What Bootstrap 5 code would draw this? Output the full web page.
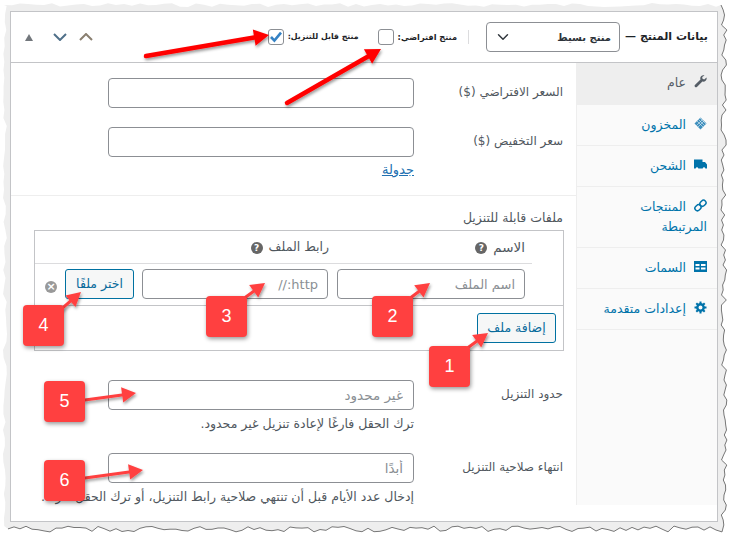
<!DOCTYPE html>
<html lang="ar" dir="rtl">
<head>
  <meta charset="UTF-8" />
  <title>بيانات المنتج</title>
  <link href="https://cdn.jsdelivr.net/npm/bootstrap@5.3.0/dist/css/bootstrap.min.css" rel="stylesheet" />
  <style>
    body { background: #fff; font-family: "DejaVu Sans", "Noto Sans", sans-serif; font-size: 12px; color: #50575e; width: 732px; height: 538px; overflow: hidden; position: relative; }
    .torn-edge { position: absolute; left: 0; top: 0; z-index: 0; }
    .overlay-art { position: absolute; left: 0; top: 0; z-index: 5; pointer-events: none; }
    .pd-box { position: relative; z-index: 1; margin: 11px 14px 0 0; width: 708px; height: 511px; background: #fff; border: 1px solid #c3c4c7; }
    .pd-head { height: 51px; border-bottom: 1px solid #c3c4c7; padding: 0 9px 0 13px; }
    .pd-title { font-size: 11px; font-weight: 700; color: #1d2327; width: 80px; white-space: nowrap; margin-left: 8px; }
    .pd-type { width: 134px; height: 30px; padding: 0 8px 0 24px; font-size: 10px; font-weight: 700; color: #2c3338; border: 1px solid #8c8f94; border-radius: 4px; background-position: left 8px center; margin-left: 17px; }
    .pd-divider { width: 1px; height: 14px; background: #dcdcde; margin-left: 11px; }
    .pd-check-label { font-size: 8.2px; font-weight: 700; color: #1d2327; white-space: nowrap; }
    .pd-check-label.is-long { font-size: 7.85px; }
    .pd-check { width: 16px; height: 16px; margin: 0 4px 0 19px; border: 1px solid #8c8f94; border-radius: 4px; }
    .pd-check:checked { background-color: #fff; border-color: #8c8f94; background-image: url("data:image/svg+xml,%3Csvg xmlns='http://www.w3.org/2000/svg' viewBox='0 0 16 16'%3E%3Cpath d='M3 8l3.4 3.6L13 3.6' fill='none' stroke='%233582c4' stroke-width='2.6'/%3E%3C/svg%3E"); background-size: 16px; }
    .pd-sorter { align-items: center; }
    .pd-chev-down { margin-right: 12px; }
    .pd-tri { margin-right: 19px; }
    .pd-tabs { width: 141px; background: #fafafa; border-left: 1px solid #eee; flex: none; }
    .pd-tab { display: block; padding: 10px 10px 0 8px; border-bottom: 1px solid #eee; color: #0073aa; font-size: 12.5px; line-height: 20px; text-decoration: none; height: 41px; }
    .pd-tab svg { margin: 0 0 0 8px; vertical-align: -1px; }
    .pd-tab.is-active { background: #eee; color: #555d66; height: 42px; }
    .pd-tab.is-tall { height: 61px; padding-left: 30px; }
    .pd-main { flex: 1; padding: 15px 13px 0 0; }
    .pd-row { display: flex; align-items: flex-start; }
    .pd-row-gap { margin-bottom: 19px; }
    .pd-label { width: 149px; flex: none; font-size: 12px; line-height: 16px; color: #50575e; padding-top: 6px; white-space: nowrap; }
    .pd-input { width: 306px; height: 30px; padding: 0 10px; font-size: 13.5px; color: #777; border: 1px solid #8c8f94; border-radius: 4px; }
    .pd-input::placeholder { color: #8a8f94; opacity: 1; }
    .pd-link { display: block; margin: 4px 149px 0 0; width: 33px; color: #2271b1; font-size: 13px; line-height: 18px; }
    .pd-sep { margin: 16px -13px 0 0; border-top: 1px solid #eee; width: 565px; }
    .pd-files-title { font-size: 12.5px; line-height: 16px; margin: 14px 0 4px; }
    .pd-files { width: 530px; height: 121px; margin: 0 -1px 29px 0; border: 1px solid #c3c4c7; }
    .pd-files-head { height: 33px; padding-top: 1px; margin-right: 31px; border-bottom: 1px solid #dcdcde; color: #50575e; font-size: 12.5px; }
    .pd-files-name { width: 203px; padding-right: 7px; font-size: 13.5px; }
    .pd-head-cell { gap: 6px; }
    .pd-files-row { height: 41px; padding: 5px 7px 0 0; gap: 9px; margin-right: 31px; }
    .pd-file-input { width: 188px; height: 30px; font-size: 13px; padding: 0 9px; border: 1px solid #8c8f94; border-radius: 4px; }
    .pd-file-input::placeholder { color: #8a8f94; opacity: 1; }
    .pd-url { width: 186px; }
    .pd-btn { height: 30px; font-size: 12.5px; padding: 0; color: #0a6b9c; background: #f6f7f7; border: 1px solid #0071a1; border-radius: 3px; white-space: nowrap; }
    .pd-pick { width: 69px; margin-right: -1px; }
    .pd-remove { width: 12px; height: 12px; border-radius: 50%; background: #999; color: #fff; font-size: 11px; line-height: 12px; text-align: center; font-weight: 700; margin-right: -1px; }
    .pd-files-foot { border-top: 1px solid #c3c4c7; height: 45px; padding: 7px 7px 0 0; }
    .pd-add { width: 79px; }
    .pd-tip { display: inline-block; width: 12px; height: 12px; border-radius: 50%; background: #666; color: #fff; font-size: 9px; line-height: 12px; text-align: center; font-weight: 700; }
    .pd-help { margin: 6px 149px 0 0; font-size: 12.5px; line-height: 16px; color: #50575e; white-space: nowrap; }
    .pd-limit { margin-bottom: 21px; }
    .pd-step { position: absolute; width: 41px; height: 41px; background: #ff4040; color: #fff; border-radius: 4px; box-shadow: 1px 2px 4px rgba(0,0,0,.4); font-family: "Liberation Sans", sans-serif; font-size: 18px; line-height: 41px; text-align: center; z-index: 6; direction: ltr; }
  </style>
</head>
<body>
  <svg class="torn-edge" id="tornEdge" width="732" height="538" viewBox="0 0 732 538"></svg>

  <div class="pd-box">
    <div class="pd-head d-flex align-items-center">
      <span class="pd-title">بيانات المنتج —</span>
      <select class="form-select pd-type"><option>منتج بسيط</option></select>
      <span class="pd-divider"></span>
      <label class="pd-check-label" for="virtualCheck">منتج افتراضي:</label>
      <input class="form-check-input pd-check mt-0" type="checkbox" id="virtualCheck" />
      <label class="pd-check-label is-long" for="downloadCheck">منتج قابل للتنزيل:</label>
      <input class="form-check-input pd-check mt-0" type="checkbox" id="downloadCheck" checked />
      <div class="d-flex pd-sorter me-auto">
        <svg width="14" height="8" viewBox="0 0 14 8"><path d="M1 7l6-6 6 6" fill="none" stroke="#8a7f70" stroke-width="2"/></svg>
        <svg class="pd-chev-down" width="14" height="8" viewBox="0 0 14 8"><path d="M1 1l6 6 6-6" fill="none" stroke="#50708a" stroke-width="2"/></svg>
        <svg class="pd-tri" width="10" height="7" viewBox="0 0 10 7"><path d="M1 7h8L5 0z" fill="#72777c"/></svg>
      </div>
    </div>

    <div class="d-flex">
      <nav class="pd-tabs">
        <a class="pd-tab is-active" href="#"><svg width="13" height="13" viewBox="0 0 13 13"><path d="M12.500 2.500l-2.300 2-1.700-.7-.3-1.800L10.500.6C8.700-.2 6.700.8 6.300 2.800c-.1.600 0 1.200.2 1.700L.9 9.900c-.6.700-.4 1.500.1 2 .6.500 1.300.6 1.900 0l5.500-5.300c2.400.6 4.900-1.400 4.100-4.100z" fill="#555d66"/></svg>عام</a>
        <a class="pd-tab" href="#"><svg width="13" height="13" viewBox="0 0 13 13"><path d="M6.500.5l6 6-6 6-6-6z" fill="#3f8fbd"/><path d="M4.500 2.500l6 6M3 4l6 6M6 1l6 6M8.500 2.500l-6 6M10 4l-6 6" stroke="#fff" stroke-width=".5"/></svg>المخزون</a>
        <a class="pd-tab" href="#"><svg width="13" height="13" viewBox="0 0 13 13"><path d="M0 1.500h8.500V4H11l2 2.500v4H0z" fill="#0073aa"/><circle cx="3" cy="10.500" r="1.200" fill="#fff"/><circle cx="10" cy="10.500" r="1.200" fill="#fff"/></svg>الشحن</a>
        <a class="pd-tab is-tall" href="#"><svg width="13" height="13" viewBox="0 0 13 13"><g fill="none" stroke="#0073aa" stroke-width="1.500"><rect x="6.500" y="1" width="5" height="6.500" rx="2.500" transform="rotate(45 9 4.200)"/><rect x="1.500" y="5.500" width="5" height="6.500" rx="2.500" transform="rotate(45 4 8.700)"/></g></svg>المنتجات المرتبطة</a>
        <a class="pd-tab" href="#"><svg width="13" height="13" viewBox="0 0 13 13"><path d="M0 1h13v11H0z" fill="#0073aa"/><path d="M1.500 4h4v2h-4zM7 4h4.500v2H7zM1.500 7.500h4v2h-4zM7 7.500h4.500v2H7z" fill="#fff"/></svg>السمات</a>
        <a class="pd-tab" href="#"><svg width="13" height="13" viewBox="0 0 13 13"><circle cx="6.500" cy="6.500" r="3.200" fill="none" stroke="#0073aa" stroke-width="2.400"/><path d="M6.500.5v3M6.500 9.500v3M.5 6.500h3M9.500 6.500h3M2.300 2.300l2 2M8.700 8.700l2 2M10.700 2.300l-2 2M4.300 8.700l-2 2" stroke="#0073aa" stroke-width="2"/></svg>إعدادات متقدمة</a>
      </nav>

      <main class="pd-main">
        <div class="pd-row pd-row-gap">
          <label class="pd-label">السعر الافتراضي ($)</label>
          <input class="form-control pd-input" type="text" />
        </div>
        <div class="pd-row">
          <label class="pd-label">سعر التخفيض ($)</label>
          <input class="form-control pd-input" type="text" />
        </div>
        <a class="pd-link" href="#">جدولة</a>
        <div class="pd-sep"></div>

        <div class="pd-files-title">ملفات قابلة للتنزيل</div>
        <div class="pd-files">
          <div class="pd-files-head d-flex align-items-center">
            <div class="pd-files-name d-flex align-items-center pd-head-cell"><span>الاسم</span><span class="pd-tip">?</span></div>
            <div class="d-flex align-items-center pd-head-cell"><span>رابط الملف</span><span class="pd-tip">?</span></div>
          </div>
          <div class="pd-files-row d-flex">
            <input class="form-control pd-file-input" type="text" placeholder="اسم الملف" />
            <input class="form-control pd-file-input pd-url" type="text" placeholder="http://" />
            <button class="btn pd-btn pd-pick" type="button">اختر ملفًا</button>
            <span class="pd-remove align-self-center">×</span>
          </div>
          <div class="pd-files-foot">
            <button class="btn pd-btn pd-add" type="button">إضافة ملف</button>
          </div>
        </div>

        <div class="pd-row">
          <label class="pd-label">حدود التنزيل</label>
          <input class="form-control pd-input" type="text" placeholder="غير محدود" />
        </div>
        <p class="pd-help pd-limit">ترك الحقل فارغًا لإعادة تنزيل غير محدود.</p>
        <div class="pd-row">
          <label class="pd-label">انتهاء صلاحية التنزيل</label>
          <input class="form-control pd-input" type="text" placeholder="أبدًا" />
        </div>
        <p class="pd-help">إدخال عدد الأيام قبل أن تنتهي صلاحية رابط التنزيل، أو ترك الحقل فارغًا.</p>
      </main>
    </div>
  </div>

  <svg class="overlay-art" width="732" height="538" viewBox="0 0 732 538">
    <defs>
      <filter id="arrowShadow" x="-20%" y="-20%" width="140%" height="140%"><feDropShadow dx="1" dy="2" stdDeviation="1.500" flood-opacity=".4"/></filter>
    </defs>
    <g id="pointerArrows" filter="url(#arrowShadow)"></g>
  </svg>

  <div class="pd-step" style="left:429px;top:346px">1</div>
  <div class="pd-step" style="left:372px;top:296px">2</div>
  <div class="pd-step" style="left:206px;top:296px">3</div>
  <div class="pd-step" style="left:23px;top:305px">4</div>
  <div class="pd-step" style="left:44px;top:381px">5</div>
  <div class="pd-step" style="left:44px;top:460px">6</div>

  <script>
    // arrows: from x,y to x,y, colour, shaft width, head size
    const arrows = [
      [146, 56, 269, 35, '#f00', 4.5, 15],
      [287, 103, 381, 49, '#f00', 4.5, 15],
      [462, 352, 488, 333, '#ff4040', 3, 14],
      [405, 302, 430, 283, '#ff4040', 3, 14],
      [239, 302, 265, 283, '#ff4040', 3, 14],
      [58, 312, 81, 292, '#ff4040', 3, 14],
      [85, 400, 136, 393, '#ff4040', 3, 14],
      [85, 478, 143, 470, '#ff4040', 3, 14]
    ];
    let arrowMarkup = '';
    arrows.forEach(([x1, y1, x2, y2, color, w, head]) => {
      const a = Math.atan2(y2 - y1, x2 - x1);
      const bx = x2 - Math.cos(a) * head, by = y2 - Math.sin(a) * head;
      const nx = -Math.sin(a) * head * 0.55, ny = Math.cos(a) * head * 0.55;
      arrowMarkup += `<line x1="${x1}" y1="${y1}" x2="${bx}" y2="${by}" stroke="${color}" stroke-width="${w}" stroke-linecap="round"/>`;
      arrowMarkup += `<path d="M${x2} ${y2}L${bx + nx} ${by + ny}L${bx - nx} ${by - ny}Z" fill="${color}"/>`;
    });
    document.getElementById('pointerArrows').innerHTML = arrowMarkup;

    // torn paper edge behind the panel, fixed seed so it stays the same
    let seed = 7;
    const jitter = n => { seed = (seed * 9301 + 49297) % 233280; return (seed / 233280 - 0.5) * n; };
    const edgeTop = [], edgeRight = [], edgeBottom = [], edgeLeft = [];
    for (let x = 4; x < 722; x += 8) edgeTop.push([x, 5 + jitter(4)]);
    for (let y = 5; y < 526; y += 5) edgeRight.push([724 + jitter(6), y]);
    for (let x = 722; x > 4; x -= 6) edgeBottom.push([x, 529 + jitter(6)]);
    for (let y = 526; y > 5; y -= 8) edgeLeft.push([5 + jitter(4), y]);
    const toPts = pts => pts.map(p => p[0].toFixed(1) + ',' + p[1].toFixed(1)).join(' ');
    document.getElementById('tornEdge').innerHTML =
      `<polygon points="${toPts([...edgeTop, ...edgeRight, ...edgeBottom, ...edgeLeft])}" fill="#eee"/>` +
      `<polyline points="${toPts([...edgeRight, ...edgeBottom])}" fill="none" stroke="#777" stroke-width="1"/>`;
  </script>
  <script src="https://cdn.jsdelivr.net/npm/bootstrap@5.3.0/dist/js/bootstrap.bundle.min.js"></script>
</body>
</html>
